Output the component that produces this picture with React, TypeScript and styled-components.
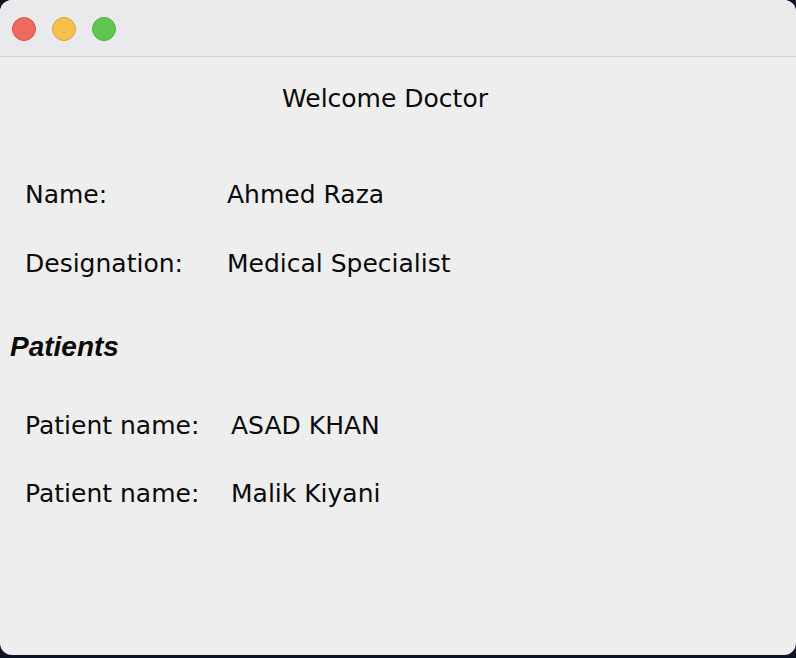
import * as React from "react";
import styled, { createGlobalStyle } from "styled-components";

const GlobalStyle = createGlobalStyle`
    html, body {
        margin: 0;
        padding: 0;
        width: 796px;
        height: 658px;
        overflow: hidden;
        background: #0e1326;
    }
`

const Window = styled.div`
    width: 796px;
    height: 655px;
    border-radius: 12px;
    overflow: hidden;
    background: #eeeeee;
    display: flex;
    flex-direction: column;
    font-family: "DejaVu Sans", "Noto Sans", sans-serif;
    color: #0a0a0a;
`

const TitleBar = styled.div`
    height: 56px;
    flex-shrink: 0;
    background: #eaeaec;
    border-bottom: 1px solid #d2d2d2;
    display: flex;
    align-items: center;
    gap: 16px;
    padding: 0 0 0 12px;
`

const Light = styled.span<{ fill: string, edge: string }>((props) => {
    return {
        width: 22,
        height: 22,
        marginTop: 1,
        borderRadius: "50%",
        background: props.fill,
        border: `1px solid ${props.edge}`,
    }
})

const Content = styled.div`
    display: flex;
    flex-direction: column;
    padding: 0 0 0 10px;
`

const Heading = styled.div`
    margin-top: 28px;
    padding-right: 36px;
    text-align: center;
    font-size: 25px;
    line-height: 28px;
`

const Row = styled.div<{ labelWidth: number, top: number }>((props) => {
    return {
        display: "grid",
        gridTemplateColumns: `${props.labelWidth}px auto`,
        marginTop: props.top,
        paddingLeft: 15,
        fontSize: 25,
        lineHeight: "28px",
        whiteSpace: "nowrap",
    }
})

const SectionTitle = styled.div`
    margin-top: 54px;
    font-family: "Liberation Sans", Arial, sans-serif;
    font-weight: bold;
    font-style: italic;
    font-size: 28px;
    line-height: 30px;
`

const doctor = [
    { label: "Name:", value: "Ahmed Raza", top: 68 },
    { label: "Designation:", value: "Medical Specialist", top: 41 },
]

const patients = [
    { label: "Patient name:", value: "ASAD KHAN", top: 50 },
    { label: "Patient name:", value: "Malik Kiyani", top: 40 },
]

const App = () => {
    return (
        <>
            <GlobalStyle />
            <Window>
                <TitleBar>
                    <Light fill="#ee6a5f" edge="#d8564b" />
                    <Light fill="#f5bf4f" edge="#d9a23c" />
                    <Light fill="#62c554" edge="#4fac43" />
                </TitleBar>
                <Content>
                    <Heading>Welcome Doctor</Heading>
                    {doctor.map((d) => (
                        <Row key={d.label} labelWidth={202} top={d.top}>
                            <span>{d.label}</span>
                            <span>{d.value}</span>
                        </Row>
                    ))}
                    <SectionTitle>Patients</SectionTitle>
                    {patients.map((p, i) => (
                        <Row key={i} labelWidth={206} top={p.top}>
                            <span>{p.label}</span>
                            <span>{p.value}</span>
                        </Row>
                    ))}
                </Content>
            </Window>
        </>
    )
}

export default App;
